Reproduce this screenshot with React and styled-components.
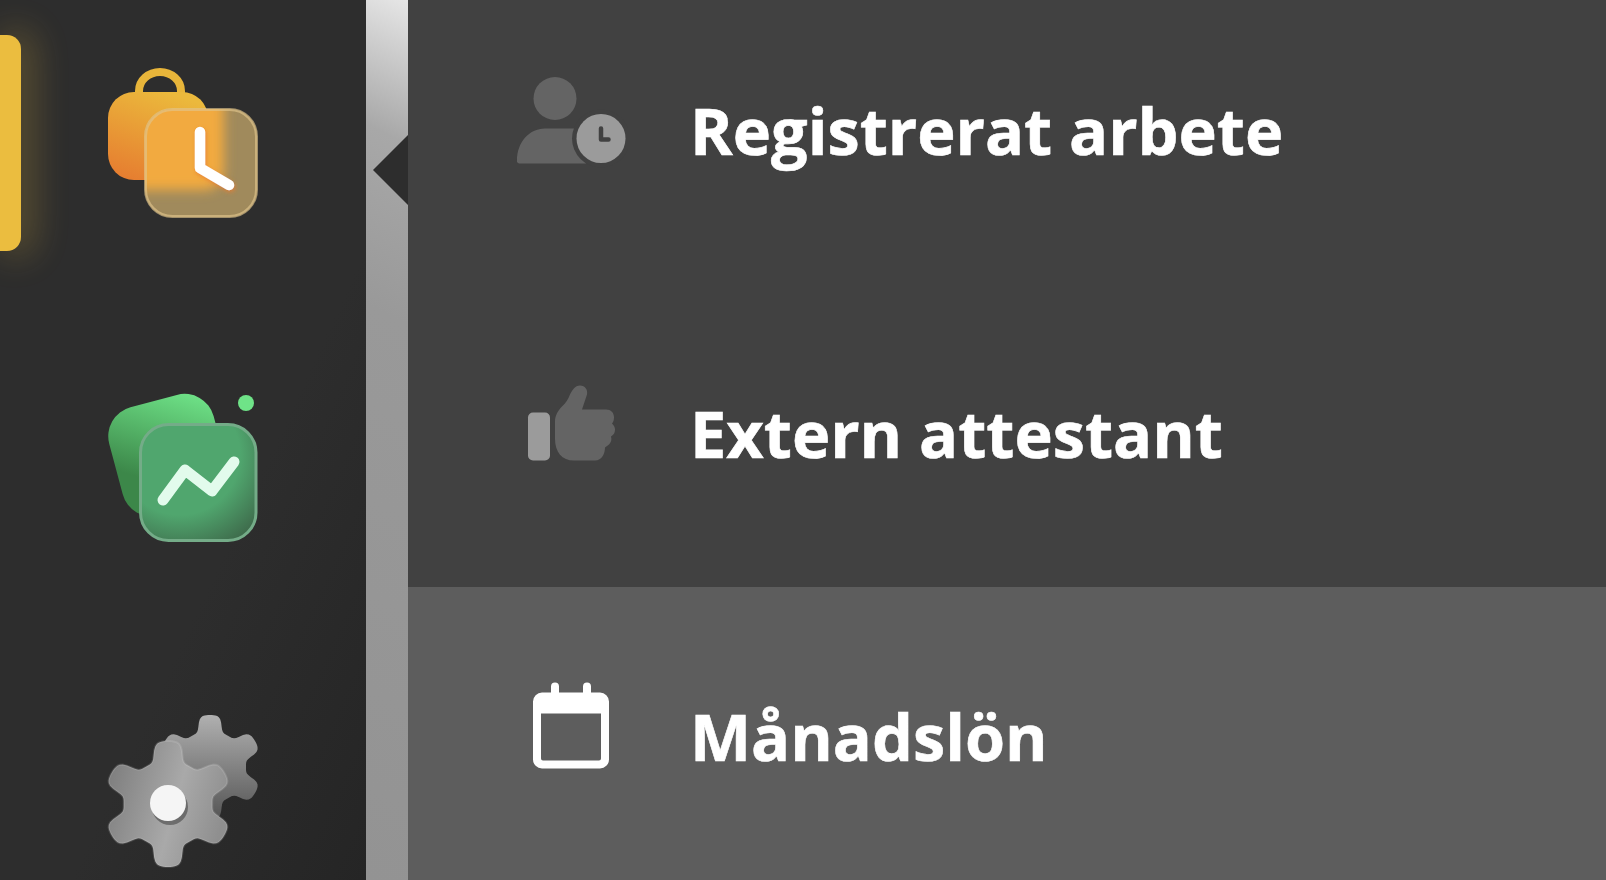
import React from "react";
import styled, { createGlobalStyle } from "styled-components";

const Global = createGlobalStyle`
  html, body { margin: 0; padding: 0; height: 100%; background: #414141; overflow: hidden; }
  #root { height: 100%; }
`;
const Page = styled.div`
  display: flex; width: 1606px; height: 880px; overflow: hidden;
  font-family: "Open Sans", sans-serif;
`;
const Sidebar = styled.nav`
  position: relative; flex: 0 0 366px; box-sizing: border-box;
  display: flex; flex-direction: column; gap: 165px;
  padding: 60px 0 0 108px;
  background: linear-gradient(115deg, #2d2d2d 0%, #2d2d2d 62%, #252525 100%);
`;
const ActiveMarker = styled.div`
  position: absolute; left: 0; top: 35px; width: 21px; height: 216px;
  background: #ebbd3f; border-radius: 0 14px 14px 0;
  box-shadow: 8px 0 34px 6px rgba(235, 189, 63, 0.24);
`;
const NavIcon = styled.svg`
  display: block; width: 160px; height: 160px; overflow: visible; filter: blur(0.7px);
`;
const Divider = styled.div`
  position: relative; flex: 0 0 42px;
  background: linear-gradient(205deg, #e6e6e6 0%, #a8a8a8 16%, #999 36%, #939393 100%);
`;
const Notch = styled.div`
  position: absolute; right: 0; top: 135px; width: 0; height: 0;
  border-style: solid; border-width: 35.5px 35px 35.5px 0;
  border-color: transparent #2d2d2d transparent transparent;
`;
const List = styled.main`
  flex: 1; display: flex; flex-direction: column; margin-top: -19px; background: #414141;
`;
const Row = styled.div`
  flex: 0 0 303px; display: flex; align-items: center; box-sizing: border-box;
  padding-left: 100px; gap: 62px;
  background: ${(p) => (p.$active ? "#5d5d5d" : "#414141")};
`;
const RowIcon = styled.svg`display: block; width: 120px; height: 120px; flex: none;`;
const Label = styled.span`
  color: #fff; font-size: 64.8px; font-weight: 700; line-height: 1; white-space: nowrap;
  margin-top: -5px; -webkit-text-stroke: 0.6px #fff;
`;

function gearPath(cx, cy, mid, amp, sx = 1) {
  const pts = [];
  const gain = 2.2;
  for (let i = 0; i < 360; i += 2) {
    const a = (i * Math.PI) / 180;
    const c = Math.cos(6 * (a + Math.PI / 2));
    const k = Math.tanh(gain * c) / Math.tanh(gain);
    const r = mid + amp * k;
    pts.push(`${(cx + sx * r * Math.cos(a)).toFixed(1)} ${(cy + r * Math.sin(a)).toFixed(1)}`);
  }
  return `M${pts.join("L")}Z`;
}

const WorkIcon = () => (
  <NavIcon viewBox="108 60 160 160">
    <defs>
      <linearGradient id="bag" x1="0.6" y1="0" x2="0.2" y2="1">
        <stop offset="0" stopColor="#ebb93c" />
        <stop offset="1" stopColor="#e67d30" />
      </linearGradient>
      <clipPath id="clockClip">
        <rect x="145" y="109" width="112" height="108" rx="27" />
      </clipPath>
      <filter id="glassBlur" x="-20%" y="-20%" width="140%" height="140%">
        <feGaussianBlur stdDeviation="6" />
      </filter>
      <filter id="handGlow" x="-30%" y="-30%" width="160%" height="160%">
        <feDropShadow dx="1" dy="2" stdDeviation="2" floodColor="#e67d30" floodOpacity="0.8" />
      </filter>
    </defs>
    <path d="M139 94v-3a21 19 0 0 1 42 0v3" fill="none" stroke="#e8b53a" strokeWidth="8" />
    <rect x="108" y="92" width="100" height="88" rx="26" fill="url(#bag)" />
    <g clipPath="url(#clockClip)">
      <rect x="145" y="109" width="112" height="108" fill="#a08a5c" />
      <rect x="110" y="85" width="114" height="105" rx="20" fill="#f2aa40" filter="url(#glassBlur)" />
    </g>
    <rect x="145.5" y="109.5" width="111" height="107" rx="27" fill="none" stroke="#e0c48c" strokeWidth="3" strokeOpacity="0.65" />
    <path d="M200 132v36l29 17" fill="none" stroke="#fff" strokeWidth="10.5" strokeLinecap="round" strokeLinejoin="round" filter="url(#handGlow)" />
  </NavIcon>
);

const StatsIcon = () => (
  <NavIcon viewBox="108 385 160 160">
    <defs>
      <linearGradient id="leaf" x1="0.85" y1="0" x2="0.25" y2="1">
        <stop offset="0" stopColor="#6fe388" />
        <stop offset="0.75" stopColor="#3c8749" />
      </linearGradient>
      <radialGradient id="tile" gradientUnits="userSpaceOnUse" cx="180" cy="455" r="100">
        <stop offset="0.6" stopColor="#50a66e" />
        <stop offset="1" stopColor="#3f6e4d" />
      </radialGradient>
    </defs>
    <rect x="114" y="400" width="108" height="112" rx="30" fill="url(#leaf)" transform="rotate(-15 165 455)" />
    <circle cx="246" cy="403" r="8" fill="#6fe388" />
    <rect x="140.5" y="424.5" width="115.5" height="116" rx="28" fill="url(#tile)" stroke="#74ac88" strokeWidth="3" />
    <path d="M163 500l22-30 27 21 22-29" fill="none" stroke="#e2fbec" strokeWidth="11" strokeLinecap="round" strokeLinejoin="round" />
  </NavIcon>
);

const SettingsIcon = () => (
  <NavIcon viewBox="108 710 160 160">
    <defs>
      <linearGradient id="gearBack" x1="0.6" y1="0" x2="0.6" y2="1">
        <stop offset="0" stopColor="#b0b0b0" />
        <stop offset="1" stopColor="#555" />
      </linearGradient>
      <linearGradient id="gearFront" x1="0" y1="0.2" x2="1" y2="0.5">
        <stop offset="0" stopColor="#7d7d7d" />
        <stop offset="0.6" stopColor="#a9a9a9" />
        <stop offset="1" stopColor="#8f8f8f" />
      </linearGradient>
    </defs>
    <path d={gearPath(210, 767, 44, 8)} fill="url(#gearBack)" />
    <path d={gearPath(168, 804, 53, 10, 1.03)} fill="url(#gearFront)" stroke="#fff" strokeOpacity="0.12" strokeWidth="2" />
    <circle cx="170" cy="807" r="18" fill="#333" opacity="0.5" />
    <circle cx="168" cy="803" r="18" fill="#f5f5f5" />
  </NavIcon>
);

const PersonClock = () => (
  <RowIcon viewBox="508 72.5 120 120">
    <circle cx="555" cy="98" r="21.5" fill="#646464" />
    <path d="M517 160a2.5 2.5 0 0 0 3 3h66v-35h-41c-16 0-28 14-28 32z" fill="#646464" />
    <circle cx="601" cy="138" r="29" fill="#414141" />
    <circle cx="601" cy="138" r="24.5" fill="#9b9b9b" />
    <path d="M601 128v11h7.5" fill="none" stroke="#414141" strokeWidth="4.5" strokeLinecap="round" strokeLinejoin="round" />
  </RowIcon>
);

const ThumbUp = () => (
  <RowIcon viewBox="508 375.5 120 120">
    <rect x="528" y="412" width="22" height="48" rx="5" fill="#9b9b9b" />
    <path d="M555 438V421c0-6 3-11 7-15 4-4 6-7 8-12 2-4 5-9 10-9 5 0 8 4 7 9l-5 15h24c5 0 8 3 8 8 0 3-1 5-2 6 2 2 3 4 3 6 0 3-1 5-4 7 1 3 0 6-2 8l-4 3c0 6-3 13-10 13h-21c-12 0-19-8-19-22z" fill="#646464" />
  </RowIcon>
);

const CalendarIcon = () => (
  <RowIcon viewBox="508 679.5 120 120">
    <path d="M555 699v-12M587 699v-12" stroke="#fff" strokeWidth="8" strokeLinecap="round" />
    <path fillRule="evenodd" d="M542 693h58a9 9 0 0 1 9 9v58a9 9 0 0 1-9 9h-58a9 9 0 0 1-9-9v-58a9 9 0 0 1 9-9zM541 714v45a2 2 0 0 0 2 2h56a2 2 0 0 0 2-2v-45z" fill="#fff" />
  </RowIcon>
);

export default function App() {
  return (
    <Page>
      <Global />
      <Sidebar>
        <ActiveMarker />
        <WorkIcon />
        <StatsIcon />
        <SettingsIcon />
      </Sidebar>
      <Divider>
        <Notch />
      </Divider>
      <List>
        <Row><PersonClock /><Label>Registrerat arbete</Label></Row>
        <Row><ThumbUp /><Label>Extern attestant</Label></Row>
        <Row $active><CalendarIcon /><Label>Månadslön</Label></Row>
      </List>
    </Page>
  );
}
